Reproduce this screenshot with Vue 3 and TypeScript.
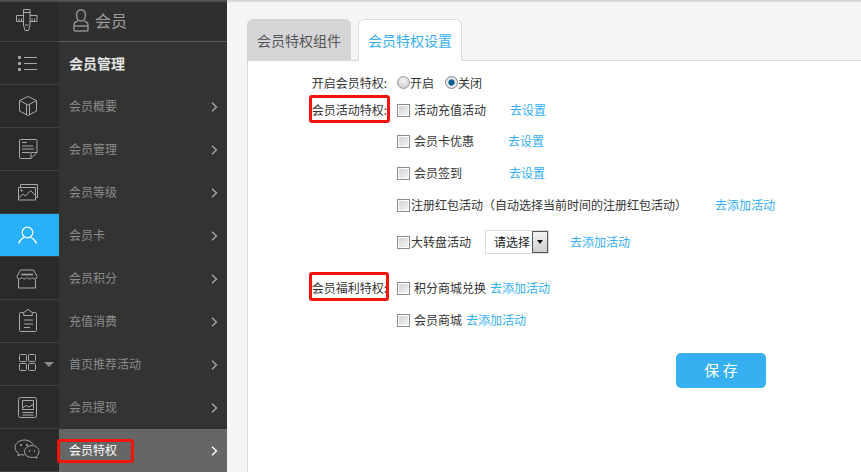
<script setup lang="ts">
const menu: { label: string; active?: boolean }[] = [
  { label: '会员概要' }, { label: '会员管理' }, { label: '会员等级' }, { label: '会员卡' },
  { label: '会员积分' }, { label: '充值消费' }, { label: '首页推荐活动' }, { label: '会员提现' },
  { label: '会员特权', active: true },
]
</script>

<template>
  <div class="page">
    <nav class="rail">
      <div class="rail-item first">
        <svg class="ico" viewBox="0 0 30 30">
          <path d="M11.500 3.500h6.500v15.500l-1.500 5.500h-3.500l-1.500-5.500zM11.500 6.500h6.500M13 19h3.500" />
          <path d="M11.500 9.500H4.500v6h7M18 9.500h7v6h-7M7 12.500v3M9.500 12.500v3M20 12.500v3M22.500 12.500v3" />
        </svg>
      </div>
      <div class="rail-item">
        <svg class="ico" viewBox="0 0 30 30">
          <path d="M12 9.500h13M12 15.500h13M12 21.500h13" />
          <rect x="6" y="8" width="3" height="3" rx=".8" class="solid" />
          <rect x="6" y="14" width="3" height="3" rx=".8" class="solid" />
          <rect x="6" y="20" width="3" height="3" rx=".8" class="solid" />
        </svg>
      </div>
      <div class="rail-item">
        <svg class="ico" viewBox="0 0 30 30">
          <path d="M16 5.500l8.500 4v10.500l-8.500 4.500-8.500-4.500V9.500z" />
          <path d="M7.500 9.500l8.500 4.500 8.500-4.500M14.500 13.500V24M17.500 13.500V24" />
        </svg>
      </div>
      <div class="rail-item">
        <svg class="ico" viewBox="0 0 30 30">
          <path d="M8.700 5.500H23.800A1.200 1.200 0 0 1 25 6.700V18.500L19 24.500H8.700A1.200 1.200 0 0 1 7.500 23.300V6.700A1.200 1.200 0 0 1 8.700 5.500z" />
          <path d="M25 18.500h-6v6M10 8.500h5M10 12h11M10 15h12M10 18.500h8" />
        </svg>
      </div>
      <div class="rail-item">
        <svg class="ico" viewBox="0 0 30 30">
          <path d="M6.500 10.500h17v12.500h-17zM8.500 10.500V7.500h17v13h-2" />
          <path d="M6.500 21l4.500-4 2.500 2 5-5.500 5 5" />
          <circle cx="9.500" cy="13.500" r=".8" />
        </svg>
      </div>
      <div class="rail-item blue">
        <svg class="ico white" viewBox="0 0 30 30">
          <circle cx="15.500" cy="12.500" r="5.300" />
          <path d="M6.500 23.500C7.500 20.300 9.800 18.600 12 17.500M24.500 23.500C23.500 20.300 21.200 18.600 19 17.500" />
        </svg>
      </div>
      <div class="rail-item">
        <svg class="ico" viewBox="0 0 30 30">
          <path d="M8.500 7H21.500L25 13.500Q25 16 23 16 21 16 20 14.500 19 16 17.500 16 16 16 15 14.500 14 16 12.500 16 11 16 10 14.500 9 16 7 16 5 16 5 13.500z" />
          <path d="M6.500 16.500V25H23.500V16.500" />
          <path d="M9.500 11.500H21" class="thick" />
        </svg>
      </div>
      <div class="rail-item">
        <svg class="ico" viewBox="0 0 30 30">
          <path d="M11.700 6.500H8.700A1.200 1.200 0 0 0 7.500 7.700V24.300A1.200 1.200 0 0 0 8.700 25.500H23.300A1.200 1.200 0 0 0 24.500 24.300V7.700A1.200 1.200 0 0 0 23.300 6.500H20.300" />
          <path d="M11.700 9.500V6.500L16 3.500L20.300 6.500V9.500zM12 14h9M12 18h9M12 21.500h6" />
        </svg>
      </div>
      <div class="rail-item apps">
        <svg class="ico" viewBox="0 0 30 30">
          <rect x="7.500" y="5.500" width="7" height="7" rx="1" />
          <rect x="16.500" y="5.500" width="7" height="7" rx="1" />
          <rect x="7.500" y="14.500" width="7" height="7" rx="1" />
          <rect x="16.500" y="14.500" width="7" height="7" rx="1" />
        </svg>
        <span class="caret"></span>
      </div>
      <div class="rail-item">
        <svg class="ico" viewBox="0 0 30 30">
          <rect x="6.500" y="5.500" width="18" height="20" rx="2" />
          <path d="M10.500 8.500h11v9h-11zM10.500 20.500h11M10.500 23h11" />
          <path d="M10.500 16l3.500-2.500 2.500 1.500 5-2.500" />
        </svg>
      </div>
      <div class="rail-item">
        <svg class="ico" viewBox="0 0 30 30">
          <path d="M21 9.500C19.500 6.500 16 5 12.500 5 7 5 3 8.500 3 12.500 3 15 4.500 17 6.500 18.300L6 21 9 19.500C10 19.800 11 20 12.500 20" />
          <path d="M20 10.500C16 10.500 12.500 13.500 12.500 16.700 12.500 20 16 22.500 20 22.500 21 22.500 22 22.300 22.800 22L25 23.300 24.600 21.200C26 20 27 18.500 27 16.700 27 13.500 24 10.500 20 10.500z" />
          <circle cx="9" cy="10" r="1" class="solid" />
          <circle cx="15" cy="10" r="1" class="solid" />
          <circle cx="17.500" cy="16" r=".8" class="solid" />
          <circle cx="22.500" cy="16" r=".8" class="solid" />
        </svg>
      </div>
    </nav>

    <aside class="side">
      <header class="side-head">
        <svg width="16" height="23" viewBox="0 0 16 23" fill="none" stroke="#8f8f8f" stroke-width="1.500">
          <path d="M8 1c3 0 4.500 2.200 4.500 5S11 12 8 12 3.500 9 3.500 6 5 1 8 1z" />
          <path d="M5 12c-2 .5-4 1.500-4 4v5a1 1 0 0 0 1 1h12a1 1 0 0 0 1-1v-5c0-2.500-2-3.500-4-4M1 17h14" />
        </svg>
        <span class="head-t">会员</span>
      </header>
      <div class="side-title"><span>会员管理</span></div>
      <a v-for="m in menu" :key="m.label" class="side-item" :class="{ active: m.active }">
        <span class="item-t">{{ m.label }}</span>
        <svg width="7" height="10" viewBox="0 0 7 10" fill="none" stroke="currentColor" stroke-width="1.400"><path d="M1 .7 5.500 5 1 9.300" /></svg>
      </a>
      <i class="mark mark-menu"></i>
    </aside>

    <main class="main">
      <div class="tabs">
        <div class="tab">会员特权组件</div>
        <div class="tab current">会员特权设置</div>
      </div>
      <section class="panel">
        <div class="form">
          <div class="row r-open">
            <label class="lab">开启会员特权:</label>
            <span class="radio"></span><span class="radio-t">开启</span>
            <span class="radio on"></span><span>关闭</span>
          </div>

          <div class="row r-a1">
            <label class="lab">会员活动特权:<i class="mark mark-a"></i></label>
            <span class="cb"></span><span class="gap">活动充值活动</span><a class="link l1">去设置</a>
          </div>
          <div class="row r-a2">
            <span class="lab"></span>
            <span class="cb"></span><span class="gap">会员卡优惠</span><a class="link l2">去设置</a>
          </div>
          <div class="row r-a2">
            <span class="lab"></span>
            <span class="cb"></span><span class="gap">会员签到</span><a class="link l3">去设置</a>
          </div>
          <div class="row r-a2">
            <span class="lab"></span>
            <span class="cb"></span><span>注册红包活动（自动选择当前时间的注册红包活动）</span><a class="link l4">去添加活动</a>
          </div>
          <div class="row r-a5">
            <span class="lab"></span>
            <span class="cb"></span><span>大转盘活动</span>
            <span class="select"><span class="sel-t">请选择</span><span class="sel-b"><i></i></span></span>
            <a class="link l5">去添加活动</a>
          </div>
          <div class="row r-b1">
            <label class="lab">会员福利特权:<i class="mark mark-b"></i></label>
            <span class="cb"></span><span class="gap">积分商城兑换</span><a class="link l6">去添加活动</a>
          </div>
          <div class="row r-a2">
            <span class="lab"></span>
            <span class="cb"></span><span class="gap">会员商城</span><a class="link l6">去添加活动</a>
          </div>
          <button class="save" type="button">保 存</button>
        </div>
      </section>
    </main>
  </div>
</template>

<style>
html, body { margin: 0; padding: 0; background: #f5f5f5; }
</style>

<style scoped>
.page {
  position: relative;
  display: flex;
  width: 861px;
  height: 472px;
  overflow: hidden;
  font-family: "Noto Sans CJK SC", "Liberation Sans", sans-serif;
  font-size: 12px;
  color: #333;
}
.page::before {
  content: "";
  position: absolute;
  left: 0; right: 0; top: 0; height: 3px; z-index: 3;
  background: linear-gradient(rgba(150, 150, 150, .45), rgba(150, 150, 150, 0));
}
.rail { width: 59px; flex: none; background: #2a2a2a; display: flex; flex-direction: column; }
.rail-item {
  height: 43px; flex: none; box-sizing: border-box; position: relative;
  padding: 6px 0 0 12px;
  border-bottom: 1px solid #3f3f3f;
}
.rail-item.first { height: 42px; }
.rail-item.blue { background: #29b0fb; }
.ico {
  display: block; width: 30px; height: 30px;
  fill: none; stroke: #a8a8a8; stroke-width: 1;
}
.ico.white { stroke: #fff; stroke-width: 1.200; }
.ico .solid { fill: #a8a8a8; stroke: none; }
.ico .thick { stroke-width: 1.600; }
.caret {
  position: absolute; left: 44px; top: 19px; width: 0; height: 0;
  border-left: 5px solid transparent; border-right: 5px solid transparent; border-top: 5px solid #8a8a8a;
}
.side { width: 168px; flex: none; background: #333; position: relative; }
.side-head {
  height: 42px; box-sizing: border-box; display: flex; align-items: center; gap: 6px;
  padding-left: 14px; border-bottom: 1px solid #5e5e5e; background: #2f2f2f;
  color: #9c9c9c; font-size: 16px;
}
.head-t { margin-bottom: 2px; }
.side-title {
  height: 43px; display: flex; align-items: center; padding-left: 10px;
  color: #e4e4e4; font-size: 14px; font-weight: 700;
}
.side-title span { margin-bottom: 2px; }
.side-item {
  height: 43px; display: flex; align-items: center; justify-content: space-between;
  padding: 0 9px 0 10px; color: #8b8b8b; font-size: 12px;
}
.item-t { margin-bottom: 2px; }
.side-item svg { color: #a6a6a6; }
.side-item.active { background: #666; color: #fff; }
.side-item.active svg { color: #fff; }
.mark { position: absolute; border: 3px solid #f4140c; border-radius: 3px; box-sizing: border-box; pointer-events: none; }
.mark-menu { left: -2px; top: 439px; width: 77px; height: 24px; }
.mark-a { left: 61px; top: calc(50% - 14px); width: 81px; height: 28px; }
.mark-b { left: 61px; top: calc(50% - 16px); width: 80px; height: 29px; }

.main { flex: 1; min-width: 0; padding: 19px 0 0 20px; background: #f5f5f5; }
.tabs { display: flex; gap: 7px; height: 41px; position: relative; z-index: 1; }
.tab {
  width: 104px; height: 41px; box-sizing: border-box; background: #d5d5d7; border-radius: 6px 6px 0 0;
  display: flex; align-items: center; justify-content: center; font-size: 14px; color: #555;
}
.tab.current {
  background: #fff; border: 1px solid #dcdcdc; border-bottom: 1px solid #fff;
  color: #35aff0; height: 42px;
}
.panel { background: #fff; border-left: 1px solid #d8d8d8; border-top: 1px solid #d8d8d8; height: 412px; box-sizing: border-box; }
.form { padding: 7px 0 0 0; }
.row { display: flex; align-items: center; height: 27px; }
.r-open { height: 28px; }
.r-a1 { height: 26px; }
.r-a2 { margin-top: 5px; height: 27px; }
.r-a5 { margin-top: 10px; height: 27px; }
.r-b1 { margin-top: 19px; height: 27px; }
.lab { width: 139px; margin-right: 10px; text-align: right; position: relative; flex: none; color: #333; white-space: nowrap; }
.cb {
  width: 11px; height: 11px; flex: none; border: 1px solid #8a8a8a; margin: 2px 1px 0 0;
  background: linear-gradient(135deg, #cfcfcf, #f7f7f7); box-shadow: inset 0 0 0 1px #fff;
}
.gap { margin-left: 3px; }
.radio {
  width: 11px; height: 11px; border-radius: 50%; border: 1px solid #9a9a9a; flex: none;
  background: radial-gradient(circle at 50% 35%, #f4f4f4, #c4c4c4);
}
.radio.on { background: radial-gradient(circle, #0b5f92 0 2.800px, #e6e6e6 3.400px); border-color: #7d8a92; }
.radio-t { margin-right: 11px; }
.link { color: #35aff0; white-space: nowrap; }
.l1 { margin-left: 24px; }
.l2 { margin-left: 34px; }
.l3 { margin-left: 47px; }
.l4 { margin-left: 28px; }
.l5 { margin-left: 21px; }
.l6 { margin-left: 4px; }
.select {
  margin-left: 14px; width: 64px; height: 24px; box-sizing: border-box; border: 1px solid #dcdcdc;
  display: flex; align-items: center; justify-content: flex-end; padding: 0;
}
.sel-t { flex: 1; padding-left: 8px; color: #222; white-space: nowrap; }
.sel-b {
  width: 16px; height: 22px; box-sizing: border-box; border: 1px solid #555; flex: none;
  background: linear-gradient(#f2f2f2, #cfcfcf); display: flex; align-items: center; justify-content: center;
}
.sel-b i { width: 0; height: 0; border-left: 3.500px solid transparent; border-right: 3.500px solid transparent; border-top: 4px solid #111; }
.save {
  display: block; margin: 20px 0 0 428px; width: 90px; height: 35px; border: 0; border-radius: 5px;
  background: #36b0f1; color: #fff; font: inherit; font-size: 15px; padding: 0 0 3px;
}
</style>
